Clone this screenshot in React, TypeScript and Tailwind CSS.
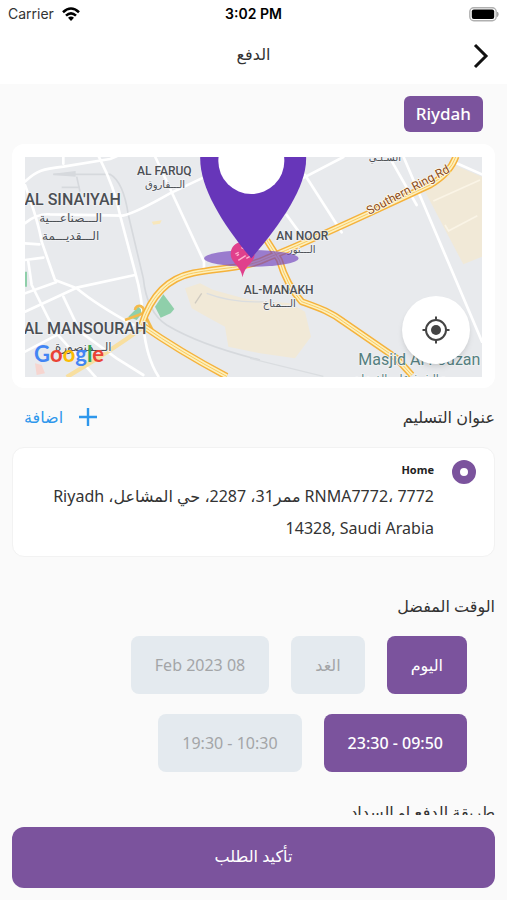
import { useState } from "react";

const minorRoads = [
  "M75 110 C110 75 130 72 190 65 L330 42 L350 34",
  "M190 34 L190 56",
  "M296 34 Q345 130 360 210 L405 380 Q428 460 430 540",
  "M75 235 Q110 205 150 208 L368 212 C400 205 440 185 510 145 L605 100",
  "M465 34 L612 350 L612 375",
  "M75 120 Q115 230 125 290 L165 405 L230 430 Q290 480 400 540",
  "M75 500 L230 428 L405 390",
  "M85 350 L95 420 L165 560 L290 700",
  "M75 345 L130 338",
  "M75 445 L168 412",
  "M190 455 L240 560 L350 640 L430 690",
  "M75 620 L190 560",
  "M430 545 Q440 640 475 694",
  "M75 295 L118 298",
  "M915 90 L1025 262",
  "M900 104 L1030 36",
  "M1210 34 L1446 590",
  "M1176 50 L1250 180",
  "M860 210 L900 265",
  "M1370 55 L1446 88",
];

const highways = [
  "M425 540 C450 460 500 400 580 384 C660 368 740 370 800 340 Q900 300 1100 208 L1290 120 Q1350 85 1368 34",
  "M425 540 Q540 620 680 694",
  "M800 285 L838 345 Q860 420 905 470 C960 490 990 500 1030 530 L1190 640 L1235 690",
];

function Label({ x, y, size, children }: { x: number; y: number; size: number; children: string }) {
  return (
    <text x={x} y={y} fontSize={size} textAnchor="middle" fill="#4b4f54" stroke="#f1f2f4" strokeWidth="5" paintOrder="stroke">
      {children}
    </text>
  );
}

function CityMap() {
  return (
    <svg
      viewBox="75 36 1371 660"
      preserveAspectRatio="xMidYMid slice"
      direction="ltr"
      className="block w-full font-['Roboto','DejaVu_Sans',sans-serif] font-medium"
      role="img"
      aria-label="Map"
    >
      <rect x="75" y="36" width="1371" height="660" fill="#e8eaed" />
      <g fill="#f1e9d7">
        <path d="M555 430 L600 415 L640 435 L750 465 L870 475 L915 500 L933 575 L885 640 L780 625 L685 605 L675 545 L620 515 L575 490Z" />
        <path d="M1270 130 L1350 55 L1446 95 L1446 335 L1390 358Z" />
      </g>
      <g fill="#8fcfaa">
        <path d="M490 448 L523 492 L512 505 L482 518 L465 485Z" />
        <path d="M385 515 L415 485 L430 500 L410 525Z" />
        <path d="M75 380 L81 380 L81 425 L75 425Z" />
      </g>
      <path d="M455 230 L485 226 L480 236 L460 239Z" fill="#f8e7bb" />
      <path d="M105 655 L125 660 L135 685 L110 690Z" fill="#f6d5d0" />
      <path d="M160 88 L330 88 Q370 110 385 210 L430 400 Q440 500 500 540 Q600 600 780 645 M230 95 L240 140 M185 127 L240 127" fill="none" stroke="#d6d9dd" strokeWidth="5" />
      <path d="M160 88 L225 80 L225 93Z" fill="#d6d9dd" stroke="#d6d9dd" strokeWidth="4" />
      <path d="M620 445 Q700 475 790 470 M750 640 L970 694" fill="none" stroke="#dadde0" strokeWidth="4" />
      <path d="M585 475 L605 445" stroke="#cfcac0" strokeWidth="4" />
      <g fill="none" stroke="#ffffff" strokeWidth="8" strokeLinecap="round" strokeLinejoin="round">
        {minorRoads.map((road) => (
          <path key={road} d={road} />
        ))}
      </g>
      <path d="M1300 168 L1440 105 M1345 258 L1432 212 M1335 240 L1347 260" fill="none" stroke="#faf4e6" strokeWidth="5" />
      <path d="M200 696 Q330 620 425 550" fill="none" stroke="#f8dfa0" strokeWidth="13" />
      <path d="M375 525 L430 505 M405 495 a13 13 0 1 1 22 10 M430 500 L460 560" fill="none" stroke="#f3ba4b" strokeWidth="8" />
      <g fill="none" strokeLinejoin="round">
        {highways.map((road) => (
          <path key={road} d={road} stroke="#f5b23c" strokeWidth="21" />
        ))}
        {highways.map((road) => (
          <path key={road} d={road} stroke="#fdf0bd" strokeWidth="12" />
        ))}
        {highways.map((road) => (
          <path key={road} d={road} stroke="#f8ca62" strokeWidth="3" />
        ))}
      </g>
      <Label x={493} y={91} size={36}>AL FARUQ</Label>
      <Label x={495} y={130} size={30}>الـــفاروق</Label>
      <Label x={218} y={181} size={48}>AL SINA'IYAH</Label>
      <Label x={212} y={232} size={36}>الـــصناعـــية</Label>
      <Label x={212} y={286} size={36}>الـــقديـــمة</Label>
      <Label x={255} y={568} size={48}>AL MANSOURAH</Label>
      <Label x={250} y={617} size={36}>الـــمنصورة</Label>
      <Label x={907} y={284} size={36}>AN NOOR</Label>
      <Label x={905} y={325} size={30}>الـــنور</Label>
      <Label x={836} y={447} size={36}>AL-MANAKH</Label>
      <Label x={838} y={485} size={30}>الـــمناخ</Label>
      <Label x={1155} y={48} size={30}>السـلـي</Label>
      <text x="1108" y="210" transform="rotate(-28 1108 210)" fontSize="36" fill="#8a4b20" stroke="#fff8e8" strokeWidth="5" paintOrder="stroke" className="font-normal">
        Southern Ring Rd
      </text>
      <g fill="#557f80" stroke="#f1f2f4" strokeWidth="5" paintOrder="stroke" className="font-normal">
        <text x="1075" y="660" fontSize="48">Masjid Al Fouzan</text>
        <text x="1235" y="711" fontSize="33" textAnchor="middle">مسجد الشيخ على الفوزان</text>
      </g>
      <text x="102" y="652" fontSize="66" className="font-['Lato',sans-serif] font-bold">
        <tspan fill="#4285f4">G</tspan>
        <tspan fill="#ea4335">o</tspan>
        <tspan fill="#fbbc05">o</tspan>
        <tspan fill="#4285f4">g</tspan>
        <tspan fill="#34a853">l</tspan>
        <tspan fill="#ea4335">e</tspan>
      </text>
      <ellipse cx="754" cy="340" rx="142" ry="25" fill="#7040bd" fillOpacity="0.65" />
      <path d="M728 397 C722 360 692 355 692 326 A36 36 0 0 1 764 326 C764 355 734 360 728 397Z" fill="#e0408c" />
      <path d="M706 327 L716 322 M710 332 L717 328 M715 346 L737 332 M735 312 L724 308 M739 340 L750 334" stroke="#ffb3cf" strokeWidth="4" />
      <path d="M601 30 C595 120 665 235 754 340 C843 235 925 120 918 30Z" fill="#6736b9" />
      <circle cx="754" cy="48" r="99" fill="#ffffff" />
    </svg>
  );
}

function LocateIcon() {
  return (
    <svg viewBox="0 0 28 28" className="size-7" fill="none" stroke="#444444" strokeWidth="2" aria-hidden="true">
      <circle cx="14" cy="14" r="10" />
      <circle cx="14" cy="14" r="5" fill="#444444" stroke="none" />
      <path d="M14 0.5V5 M14 23V27.5 M0.5 14H5 M23 14H27.5" />
    </svg>
  );
}

function StatusBar() {
  return (
    <div dir="ltr" className="grid h-7 grid-cols-3 items-center px-2 font-['Inter',sans-serif] text-sm text-black">
      <div className="flex items-center gap-2">
        <span className="text-[#333333]">Carrier</span>
        <svg viewBox="0 0 18 14" className="h-3.5 w-4.5" fill="none" stroke="#000000" strokeWidth="2.6" aria-hidden="true">
          <path d="M1 5.2 Q9 -2.2 17 5.2" />
          <path d="M4 8.6 Q9 4 14 8.6" />
          <path d="M9 14 L6 10.8 Q9 8.4 12 10.8Z" fill="#000000" stroke="none" />
        </svg>
      </div>
      <span className="text-center font-semibold">3:02 PM</span>
      <svg viewBox="0 0 30 15" className="h-[15px] w-[30px] justify-self-end" aria-hidden="true">
        <rect x="0.8" y="0.8" width="26.4" height="12.9" rx="4" fill="#ffffff" stroke="#b0b0b0" strokeWidth="1.4" />
        <rect x="2.8" y="2.6" width="22.4" height="9.3" rx="2" fill="#000000" />
        <path d="M28.5 5 Q30 7.2 28.5 9.5Z" fill="#a5a5a5" stroke="#a5a5a5" />
      </svg>
    </div>
  );
}

type ChipGroupProps = { label: string; options: string[]; value: string; onChange: (value: string) => void };

function ChipGroup({ label, options, value, onChange }: ChipGroupProps) {
  return (
    <div role="group" aria-label={label} className="flex gap-[22px] px-7">
      {options.map((option) => (
        <button
          key={option}
          type="button"
          aria-pressed={option === value}
          onClick={() => onChange(option)}
          className={
            option === value
              ? "h-[58px] rounded-lg bg-[#7b539d] px-6 text-base font-medium whitespace-nowrap text-white"
              : "h-[58px] rounded-lg bg-[#e4eaef] px-6 text-base whitespace-nowrap text-[#a3a5a7]"
          }
        >
          {option}
        </button>
      ))}
    </div>
  );
}

export default function App() {
  const [day, setDay] = useState("اليوم");
  const [slot, setSlot] = useState("09:50 - 23:30");

  return (
    <div dir="rtl" className="flex h-screen flex-col bg-[#fafafa] font-['Noto_Sans','DejaVu_Sans',sans-serif] text-base text-[#333333]">
      <header className="shrink-0 bg-white">
        <StatusBar />
        <div className="grid h-14 grid-cols-3 items-center px-4">
          <button type="button" aria-label="رجوع" className="justify-self-start">
            <svg viewBox="0 0 22 28" className="h-7 w-[22px]" fill="none" stroke="#111111" strokeWidth="3" aria-hidden="true">
              <path d="M6 3 L17 14 L6 25" />
            </svg>
          </button>
          <h1 className="pb-1 text-center">الدفع</h1>
        </div>
      </header>

      <main className="flex min-h-0 flex-1 flex-col overflow-hidden px-3 pt-3">
        <button type="button" dir="ltr" className="mx-3 h-9 shrink-0 self-start rounded-md bg-[#7b539d] px-3 text-[17px] font-medium text-white">
          Riydah
        </button>

        <section className="relative mt-3 shrink-0 rounded-xl bg-white px-[13px] pt-[13px] pb-[11px]">
          <CityMap />
          <button type="button" aria-label="موقعي" className="absolute right-[25px] bottom-6 flex size-[68px] items-center justify-center rounded-full bg-white shadow-md">
            <LocateIcon />
          </button>
        </section>

        <div className="mt-[11px] flex h-9 shrink-0 items-center justify-between">
          <h2 className="font-medium">عنوان التسليم</h2>
          <button type="button" className="flex items-center gap-4 px-3 text-[#2e97ec]">
            <svg viewBox="0 0 18 18" className="size-[18px]" fill="none" stroke="currentColor" strokeWidth="2.4" aria-hidden="true">
              <path d="M9 0V18 M0 9H18" />
            </svg>
            اضافة
          </button>
        </div>

        <label className="mt-3 flex shrink-0 gap-[18px] rounded-xl border border-[#f2f2f2] bg-white px-[18px] py-3">
          <input type="radio" name="address" defaultChecked className="size-6 shrink-0 appearance-none rounded-full border-8 border-[#7b539d] bg-white" />
          <span className="flex flex-col">
            <span className="text-[11px] leading-5 font-bold text-[#222222]">Home</span>
            <span className="leading-8">RNMA7772، 7772 ممر31، 2287، حي المشاعل، Riyadh 14328, Saudi Arabia</span>
          </span>
        </label>

        <h2 className="mt-[35px] shrink-0 leading-7 font-medium">الوقت المفضل</h2>
        <div className="mt-4 flex shrink-0 flex-col gap-5">
          <ChipGroup label="اليوم" options={["اليوم", "الغد", "08 Feb 2023"]} value={day} onChange={setDay} />
          <ChipGroup label="الوقت" options={["09:50 - 23:30", "10:30 - 19:30"]} value={slot} onChange={setSlot} />
        </div>

        <h2 className="mt-[26px] shrink-0 leading-7 font-medium">طريقة الدفع او السداد</h2>
      </main>

      <footer className="shrink-0 p-3">
        <button type="button" className="h-[61px] w-full rounded-xl bg-[#7b539d] pb-1 text-base font-medium text-white">
          تأكيد الطلب
        </button>
      </footer>
    </div>
  );
}
